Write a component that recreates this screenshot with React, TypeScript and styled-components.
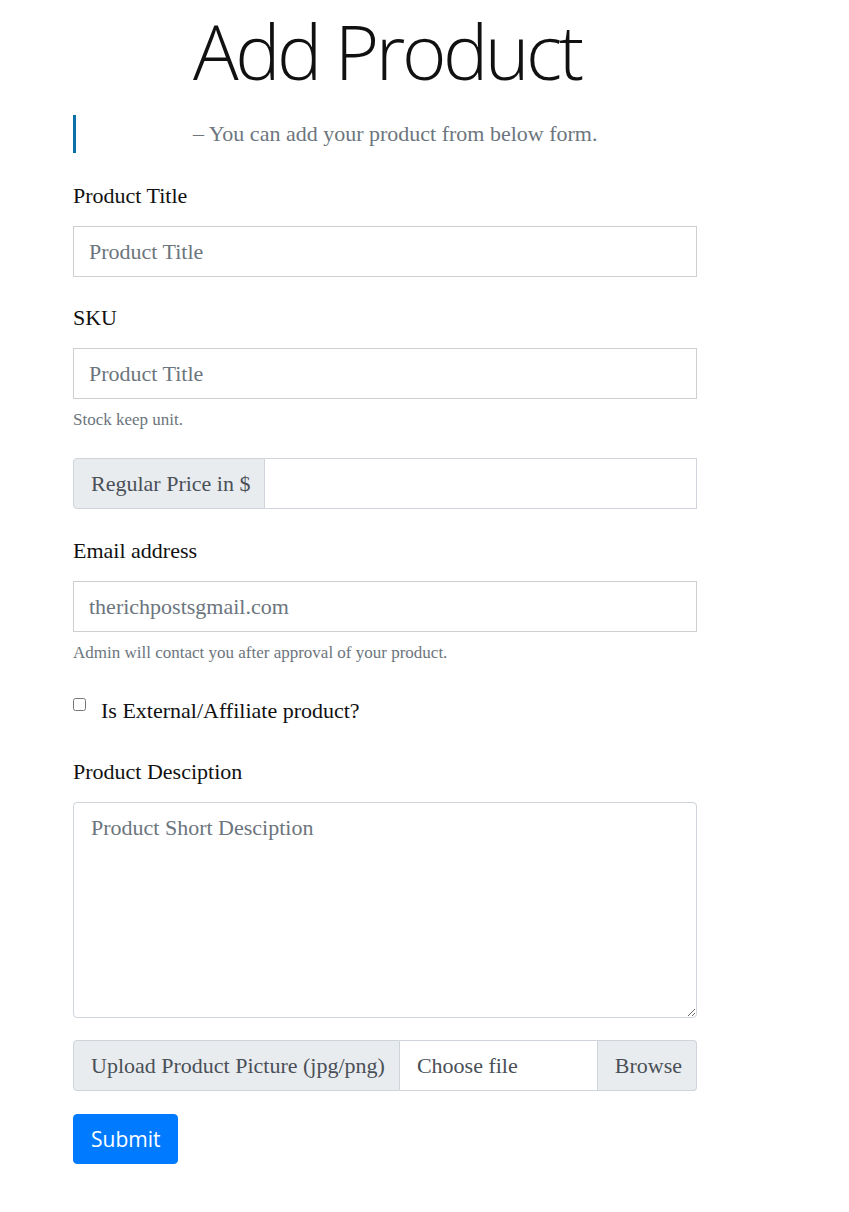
import React from "react";
import styled, { createGlobalStyle } from "styled-components";

const GlobalStyle = createGlobalStyle`
  html, body { margin: 0; padding: 0; background: #fff; }
  body {
    font-family: "Liberation Serif", "Times New Roman", serif;
    font-size: 22px;
    color: #212529;
  }
  *, *::before, *::after { box-sizing: border-box; }
`;

const Page = styled.div`
  padding: 5px 0 40px 73px;
  width: 697px;
`;

const Title = styled.h1`
  margin: 0 0 19px 120px;
  font-family: "Open Sans", "Noto Sans", sans-serif;
  font-weight: 300;
  font-size: 76px;
  line-height: 1.2;
  letter-spacing: -3.5px;
  color: #111;
`;

const Quote = styled.blockquote`
  margin: 0 0 26px 0;
  border-left: 3px solid #0b70a8;
  padding-left: 117px;
  line-height: 38px;
  font-size: 22px;
  color: #6c757d;
`;

const Form = styled.form`
  display: flex;
  flex-direction: column;
  width: 624px;
`;

const Group = styled.div<{ $mb?: number }>`
  display: flex;
  flex-direction: column;
  margin-bottom: ${(p) => p.$mb ?? 25}px;
`;

const Label = styled.label`
  display: block;
  line-height: 33px;
  margin-bottom: 14px;
  color: #111;
`;

const TextInput = styled.input`
  display: block;
  width: 100%;
  height: 51px;
  padding: 0 15px;
  border: 1px solid #cfcfcf;
  border-radius: 0;
  font-family: inherit;
  font-size: 22px;
  color: #495057;
  background: #fff;
  &::placeholder { color: #6c757d; opacity: 1; }
`;

const Help = styled.small<{ $mt?: number }>`
  display: block;
  margin-top: ${(p) => p.$mt ?? 9}px;
  font-size: 17px;
  line-height: 24px;
  color: #6c757d;
`;

const InputGroup = styled.div`
  display: flex;
  align-items: stretch;
  width: 100%;
  height: 51px;
`;

const Addon = styled.span<{ $side?: "left" | "right" }>`
  display: flex;
  align-items: center;
  padding: 0 14px 0 17px;
  background: #e9ecef;
  border: 1px solid #ced4da;
  color: #495057;
  font-size: 22px;
  white-space: nowrap;
  border-radius: ${(p) => (p.$side === "right" ? "0 4px 4px 0" : "4px 0 0 4px")};
  ${(p) => (p.$side === "right" ? "border-left: 0;" : "")}
`;

const GroupInput = styled.input`
  flex: 1;
  min-width: 0;
  border: 1px solid #ced4da;
  border-left: 0;
  padding: 0 15px;
  font-family: inherit;
  font-size: 22px;
  color: #495057;
  background: #fff;
`;

const FileBox = styled.label`
  flex: 1;
  display: flex;
  align-items: center;
  padding: 0 17px;
  border: 1px solid #ced4da;
  border-left: 0;
  color: #495057;
  background: #fff;
  font-size: 22px;
  cursor: pointer;
  input { display: none; }
`;

const CheckRow = styled.div`
  display: flex;
  align-items: flex-start;
  gap: 15px;
  margin-bottom: 28px;
  margin-top: 3px;
`;

const Check = styled.input`
  width: 13px;
  height: 13px;
  margin: 4px 0 0 0;
  flex: none;
`;

const CheckLabel = styled.label`
  line-height: 33px;
  color: #111;
`;

const TextArea = styled.textarea`
  display: block;
  width: 100%;
  height: 216px;
  padding: 8px 17px;
  border: 1px solid #ced4da;
  border-radius: 4px;
  font-family: inherit;
  font-size: 22px;
  line-height: 33px;
  color: #495057;
  resize: vertical;
  &::placeholder { color: #6c757d; opacity: 1; }
`;

const Submit = styled.button`
  align-self: flex-start;
  height: 50px;
  padding: 0 17px;
  border: 1px solid #007bff;
  border-radius: 4px;
  background: #007bff;
  color: #fff;
  font-family: "Open Sans", "Noto Sans", sans-serif;
  font-size: 21px;
  cursor: pointer;
`;

export default function App() {
  return (
    <>
      <GlobalStyle />
      <Page>
        <Title>Add Product</Title>
        <Quote>– You can add your product from below form.</Quote>
        <Form onSubmit={(e) => e.preventDefault()}>
          <Group $mb={24}>
            <Label htmlFor="title">Product Title</Label>
            <TextInput id="title" placeholder="Product Title" />
          </Group>
          <Group $mb={26}>
            <Label htmlFor="sku">SKU</Label>
            <TextInput id="sku" placeholder="Product Title" />
            <Help>Stock keep unit.</Help>
          </Group>
          <Group $mb={25}>
            <InputGroup>
              <Addon>Regular Price in $</Addon>
              <GroupInput type="text" />
            </InputGroup>
          </Group>
          <Group $mb={26}>
            <Label htmlFor="email">Email address</Label>
            <TextInput id="email" type="email" placeholder="therichpostsgmail.com" />
            <Help>Admin will contact you after approval of your product.</Help>
          </Group>
          <CheckRow>
            <Check type="checkbox" id="ext" />
            <CheckLabel htmlFor="ext">Is External/Affiliate product?</CheckLabel>
          </CheckRow>
          <Group $mb={22}>
            <Label htmlFor="desc">Product Desciption</Label>
            <TextArea id="desc" placeholder="Product Short Desciption" />
          </Group>
          <Group $mb={23}>
            <InputGroup>
              <Addon>Upload Product Picture (jpg/png)</Addon>
              <FileBox>
                <input type="file" accept="image/png,image/jpeg" />
                Choose file
              </FileBox>
              <Addon $side="right">Browse</Addon>
            </InputGroup>
          </Group>
          <Submit type="submit">Submit</Submit>
        </Form>
      </Page>
    </>
  );
}
